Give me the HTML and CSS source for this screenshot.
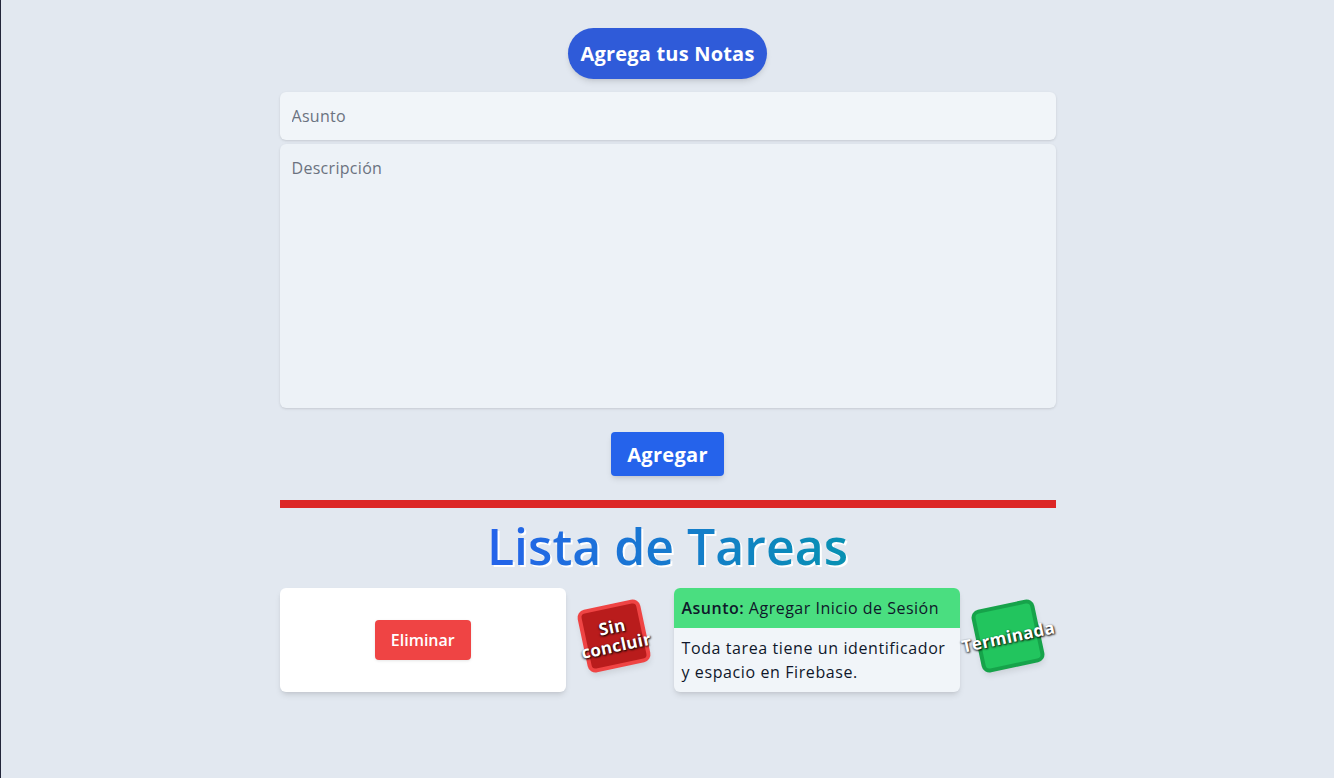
FILE: index.html
```html
<!DOCTYPE html>
<html lang="es">
<head>
<meta charset="utf-8">
<title>Notas</title>
<link rel="stylesheet" href="styles.css">
</head>
<body>
<main class="page">
  <h1 class="pill">Agrega tus Notas</h1>
  <form class="form">
    <input class="field" type="text" placeholder="Asunto">
    <textarea class="field area" rows="10" placeholder="Descripción"></textarea>
    <button class="btn-add" type="button">Agregar</button>
  </form>
  <div class="divider"></div>
  <h2 class="title">Lista de Tareas</h2>
  <section class="tasks">
    <div class="task">
      <div class="card card-blank">
        <button class="btn-del" type="button">Eliminar</button>
      </div>
      <div class="badge-wrap">
        <div class="badge badge-red"><span>Sin concluir</span></div>
      </div>
    </div>
    <div class="task">
      <div class="card">
        <div class="card-head"><b>Asunto:</b> Agregar Inicio de Sesión</div>
        <div class="card-body">Toda tarea tiene un identificador y espacio en Firebase.</div>
      </div>
      <div class="badge-wrap">
        <div class="badge badge-green"><span>Terminada</span></div>
      </div>
    </div>
  </section>
</main>
</body>
</html>
```
FILE: styles.css
```css
* { box-sizing: border-box; }
html, body { height: 100%; }
body {
  margin: 0;
  background: #e2e8f0;
  border-left: 1px solid #23263a;
  font-family: "Open Sans", "Noto Sans", sans-serif;
  color: #0f172a;
}
.page {
  width: 776px;
  margin: 0 auto;
  padding-top: 28px;
  display: flex;
  flex-direction: column;
}
.pill {
  align-self: center;
  margin: 0 0 13px;
  padding: 11px 12px;
  background: #2f5bd9;
  color: #fff;
  font-size: 20px;
  line-height: 29px;
  font-weight: 700;
  letter-spacing: 0.2px;
  border-radius: 999px;
  box-shadow: 0 4px 6px -1px rgba(0,0,0,.1), 0 2px 4px -2px rgba(0,0,0,.1);
}
.form {
  display: flex;
  flex-direction: column;
  gap: 4px;
}
.field {
  display: block;
  width: 100%;
  border: 0;
  outline: none;
  border-radius: 6px;
  background: #f1f5f9;
  padding: 12px;
  font-family: inherit;
  font-size: 16px;
  line-height: 24px;
  letter-spacing: 0.3px;
  color: #334155;
  box-shadow: 0 1px 3px 0 rgba(0,0,0,.1), 0 1px 2px -1px rgba(0,0,0,.1);
}
.field::placeholder { color: #6b7280; }
.area {
  height: 264px;
  resize: none;
  background: #edf2f7;
}
.btn-add {
  align-self: center;
  margin-top: 20px;
  height: 44px;
  padding: 0 16px;
  border: 0;
  border-radius: 4px;
  background: #2563eb;
  color: #fff;
  font-family: inherit;
  font-size: 20px;
  font-weight: 700;
  letter-spacing: 0.3px;
  box-shadow: 0 4px 6px -1px rgba(0,0,0,.1), 0 2px 4px -2px rgba(0,0,0,.1);
}
.divider {
  margin-top: 24px;
  height: 8px;
  background: #dc2626;
}
.title {
  align-self: center;
  margin: 12px 0 16px;
  font-size: 50px;
  line-height: 52px;
  font-weight: 600;
  letter-spacing: 0;
  background: linear-gradient(to right, #2563eb, #0891b2);
  -webkit-background-clip: text;
  background-clip: text;
  color: transparent;
  filter: drop-shadow(2px 2px 0 #fff);
}
.tasks {
  display: grid;
  grid-template-columns: 1fr 1fr;
  column-gap: 12px;
}
.task {
  display: flex;
  align-items: stretch;
}
.card {
  width: 75%;
  border-radius: 6px;
  overflow: hidden;
  background: #f1f5f9;
  box-shadow: 0 4px 6px -1px rgba(0,0,0,.1), 0 2px 4px -2px rgba(0,0,0,.1);
  font-size: 16px;
  line-height: 24px;
  letter-spacing: 0.5px;
}
.card-blank {
  background: #fff;
  display: flex;
  align-items: center;
  justify-content: center;
}
.btn-del {
  width: 96px;
  height: 40px;
  border: 0;
  border-radius: 4px;
  background: #ef4444;
  color: #fff;
  font-family: inherit;
  font-size: 16px;
  font-weight: 600;
  box-shadow: 0 1px 3px 0 rgba(0,0,0,.1);
}
.card-head {
  background: #4ade80;
  padding: 8px;
  color: #0f172a;
}
.card-head b { font-weight: 600; }
.card-body {
  padding: 8px;
  color: #0f172a;
  letter-spacing: 0.6px;
}
.badge-wrap {
  flex: 1;
  display: flex;
  align-items: center;
  justify-content: center;
  padding-bottom: 8px;
}
.badge {
  width: 64px;
  height: 64px;
  border-radius: 8px;
  border: 4px solid;
  transform: rotate(-12deg);
  display: flex;
  align-items: center;
  justify-content: center;
  text-align: center;
  box-shadow: 0 4px 6px -1px rgba(0,0,0,.1);
}
.badge span {
  color: #fff;
  font-size: 17px;
  line-height: 19px;
  font-weight: 700;
  letter-spacing: 0.3px;
  text-shadow: 1px 1px 2px #000, -1px 1px 2px rgba(0,0,0,.4);
}
.badge-red { background: #b91c1c; border-color: #ef4444; }
.badge-green { background: #22c55e; border-color: #16a34a; }
```
